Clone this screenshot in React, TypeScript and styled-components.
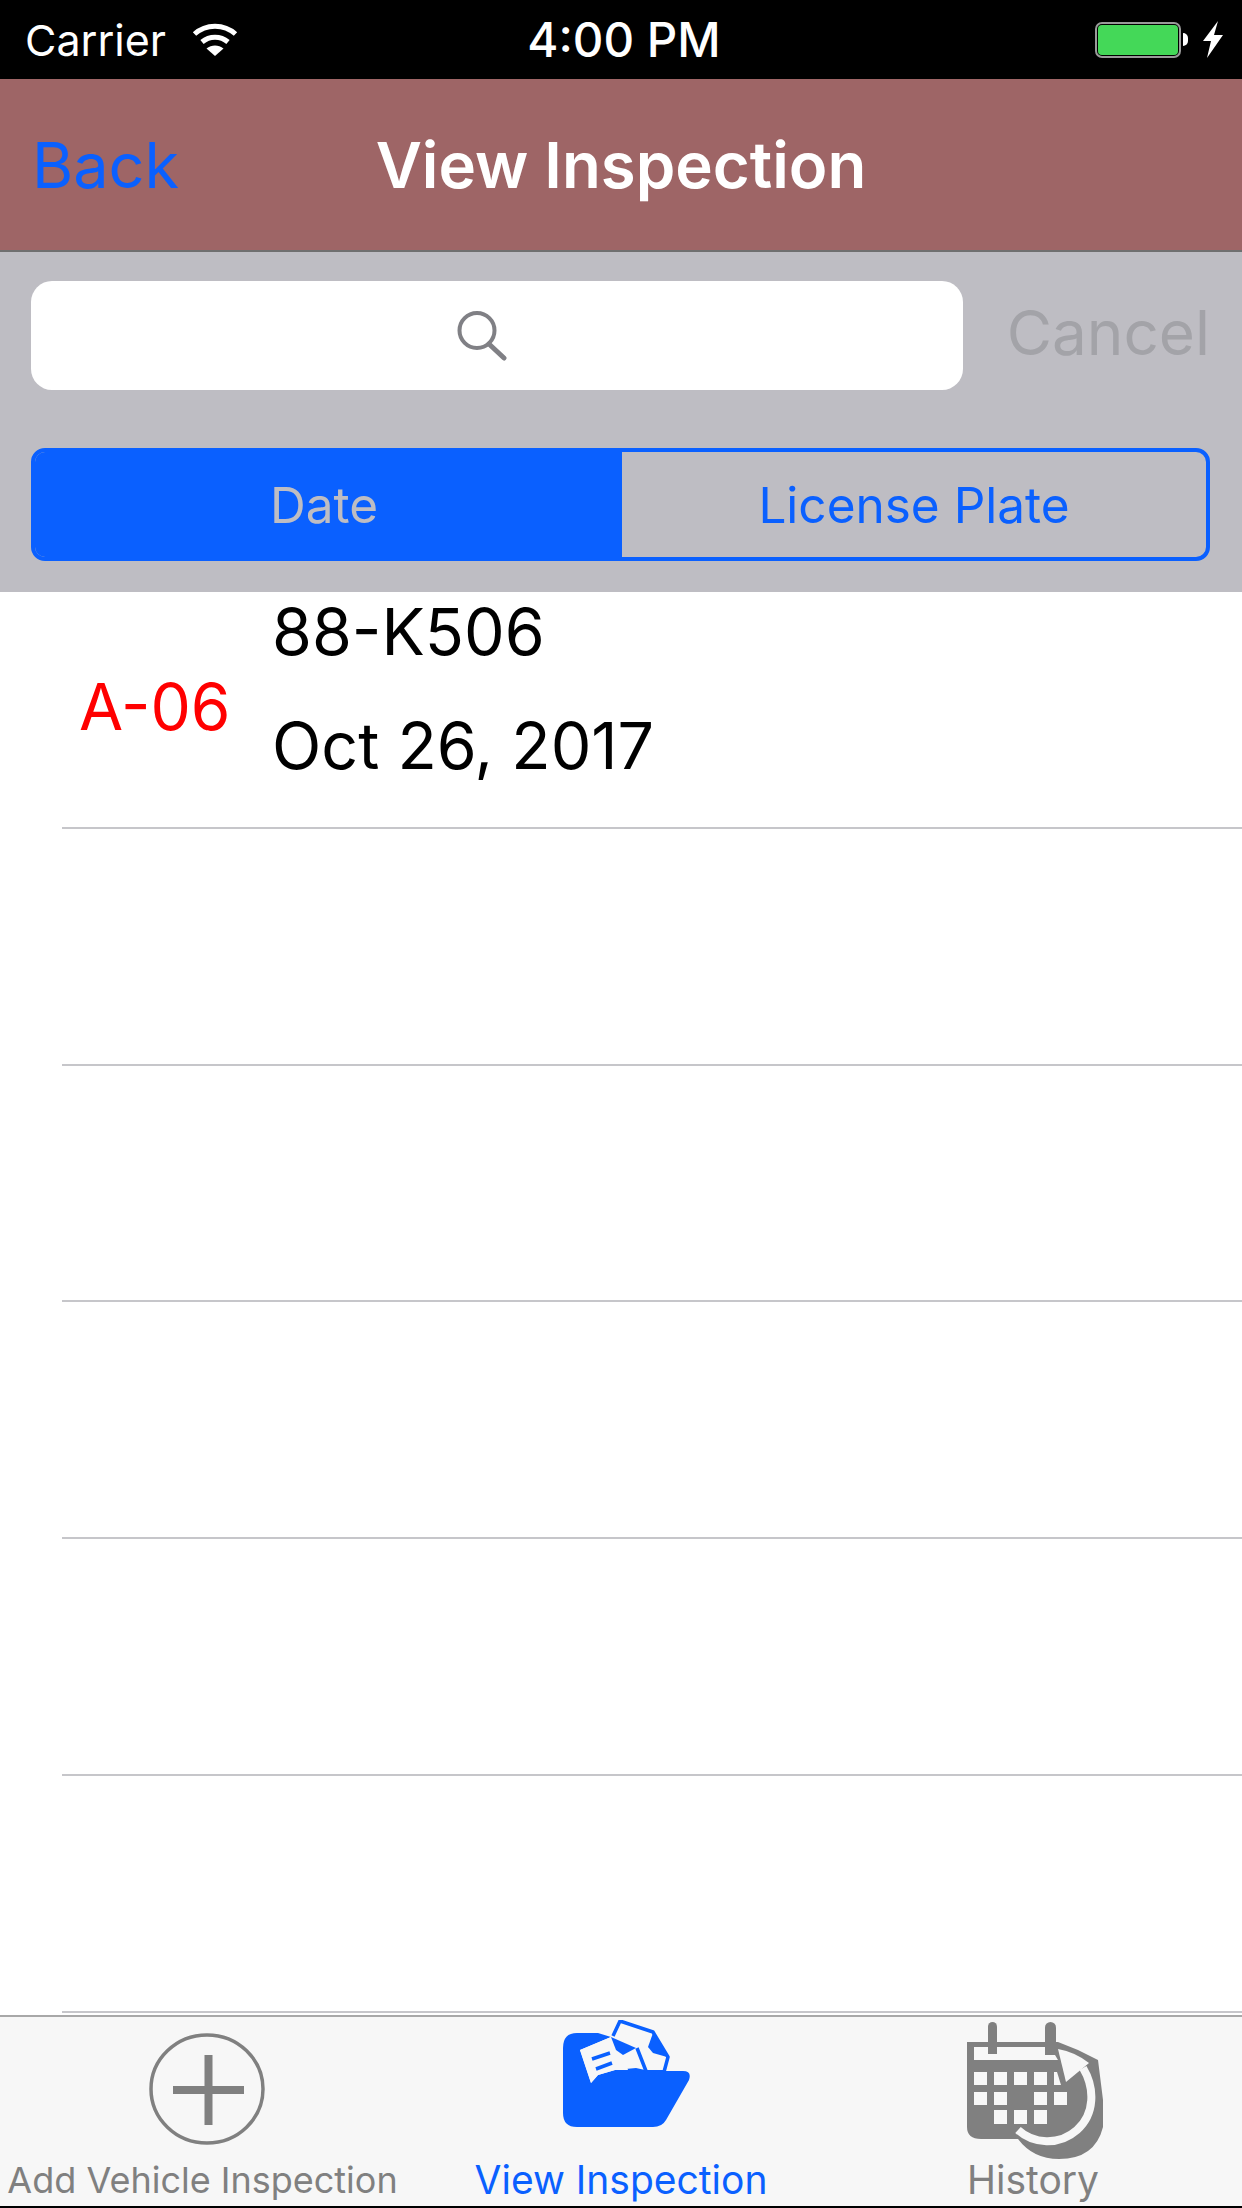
import { FC, ReactElement } from "react";
import styled, { createGlobalStyle } from "styled-components";

const GlobalStyle = createGlobalStyle`
  html, body {
    margin: 0;
    padding: 0;
    background: #fff;
  }
  * {
    box-sizing: border-box;
  }
`;

const rowCount = 6;

const WifiIcon: FC = () => (
  <svg width="46" height="34" viewBox="0 0 46 34" fill="none" stroke="#fff" strokeWidth="5">
    <path d="M2.5 11 C14 0.5 32 0.5 43.5 11" />
    <path d="M10 19 C17.5 12.5 28.5 12.5 36 19" />
    <path d="M23 33 L14.5 25.5 C19.5 21.5 26.5 21.5 31.5 25.5 Z" fill="#fff" stroke="none" />
  </svg>
);

const BoltIcon: FC = () => (
  <svg width="20" height="37" viewBox="0 0 20 37">
    <path d="M15 0 L0 20 H8 L4 37 L20 14 H11 Z" fill="#fff" />
  </svg>
);

const SearchIcon: FC = () => (
  <svg width="50" height="50" viewBox="0 0 50 50" fill="none" stroke="#808085">
    <circle cx="20" cy="19.5" r="17.5" strokeWidth="4" />
    <path d="M32 33 L47 47" strokeWidth="5" strokeLinecap="round" />
  </svg>
);

const AddIcon: FC = () => (
  <svg width="116" height="112" viewBox="0 0 116 112" fill="none" stroke="#808080">
    <ellipse cx="58" cy="56" rx="56" ry="54" strokeWidth="3.5" />
    <path d="M59.5 22 V92 M24 57 H95" strokeWidth="8" />
  </svg>
);

const FolderIcon: FC = () => (
  <svg width="127" height="107" viewBox="0 0 127 107">
    <path
      d="M0 28 Q0 13 14 13 H35 L48 17 L17 30 L28 63 L35 55 L52 50 L73 48 L82 50 H100 V51 H120 Q129 51 126 60 L103 100 Q99 107 90 107 H14 Q0 107 0 93 Z"
      fill="#0a60ff"
    />
    <path d="M17 30 L48 17 L54 31 L60 36 L65 50 L52 50 L35 55 L28 63 Z" fill="#f7f7f7" />
    <path d="M29 39 L47 33 M33 49 L49 43" stroke="#0a60ff" strokeWidth="3.5" fill="none" />
    <path d="M53 15 L58 3 L89 13 L103 38 L100 50 L84 50 L75 28 Z" fill="#f7f7f7" />
    <path
      d="M50 16 L57 1 L90 12 L105 37 L101 52 M74 28 L83 51"
      fill="none"
      stroke="#0a60ff"
      strokeWidth="3.5"
      strokeLinejoin="round"
    />
    <path d="M48 17 L73 28 L60 35 L53 30 Z" fill="#0a60ff" />
    <path d="M90 13 L104 37 L90 33 L85 27 Z" fill="#0a60ff" />
  </svg>
);

const calendarSquares = [
  { y: 50, h: 13, xs: [7, 27, 47, 67] },
  { y: 70, h: 13, xs: [7, 27, 67, 87] },
  { y: 88, h: 14, xs: [27, 47, 67] },
];

const HistoryIcon: FC = () => (
  <svg width="136" height="137" viewBox="0 0 136 137">
    <path
      d="M0 20 H91 L111 28 L131 38 L136 78 V105 Q128 137 92 137 Q66 137 51 117 H14 Q0 117 0 105 Z"
      fill="#808080"
    />
    <rect x="21" y="0" width="9" height="33" rx="4.5" fill="#808080" />
    <path d="M21 28 V6 Q25 -2 30 8 V28 Z" fill="#808080" />
    <rect x="78" y="0" width="11" height="33" rx="5.5" fill="#808080" />
    <path d="M7 25 H21 V32 H30 V25 H78 V33 H88 L91 38 H7 Z" fill="#f7f7f7" />
    {calendarSquares.map((row) =>
      row.xs.map((x) => (
        <rect key={`${row.y}-${x}`} x={x} y={row.y} width="13" height={row.h} fill="#f7f7f7" />
      ))
    )}
    <path d="M87 50 H90 L94 63 H87 Z" fill="#f7f7f7" />
    <path d="M91 27 L99 60 L122 41 Q108 30 91 27 Z" fill="#f7f7f7" />
    <path
      d="M116 46 C128 66 128 92 110 108 C92 124 66 122 51 108"
      fill="none"
      stroke="#f7f7f7"
      strokeWidth="8"
    />
  </svg>
);

const tabs: {
  label: string;
  active: boolean;
  icon: ReactElement;
  top: number;
  iconShift?: number;
  labelShift?: number;
  small?: boolean;
}[] = [
  { label: "Add Vehicle Inspection", active: false, icon: <AddIcon />, top: 16, labelShift: 9, small: true },
  { label: "View Inspection", active: true, icon: <FolderIcon />, top: 3, iconShift: 11 },
  { label: "History", active: false, icon: <HistoryIcon />, top: 5, labelShift: 4 },
];

export default function App() {
  return (
    <Screen>
      <GlobalStyle />
      <StatusBar>
        <StatusLeft>
          <span>Carrier</span>
          <WifiIcon />
        </StatusLeft>
        <StatusTime>4:00 PM</StatusTime>
        <StatusRight>
          <Battery>
            <BatteryFill />
          </Battery>
          <BatteryCap />
          <BoltIcon />
        </StatusRight>
      </StatusBar>
      <NavBar>
        <BackLink>Back</BackLink>
        <NavTitle>View Inspection</NavTitle>
      </NavBar>
      <SearchPanel>
        <SearchRow>
          <SearchField>
            <SearchIcon />
          </SearchField>
          <CancelLabel>Cancel</CancelLabel>
        </SearchRow>
        <Segments>
          <Segment $selected>Date</Segment>
          <Segment>License Plate</Segment>
        </Segments>
      </SearchPanel>
      <List>
        <Row>
          <Badge>A-06</Badge>
          <RowText>
            <RowLine>88-K506</RowLine>
            <RowLine>Oct 26, 2017</RowLine>
          </RowText>
        </Row>
        {Array.from({ length: rowCount - 1 }).map((_, i) => (
          <Row key={i} />
        ))}
      </List>
      <TabBar>
        {tabs.map((tab) => (
          <TabItem key={tab.label} $active={tab.active}>
            <TabIconSlot $top={tab.top} $shift={tab.iconShift ?? 0}>
              {tab.icon}
            </TabIconSlot>
            <TabLabel $small={tab.small} $shift={tab.labelShift ?? 0}>
              {tab.label}
            </TabLabel>
          </TabItem>
        ))}
      </TabBar>
      <HomeEdge />
    </Screen>
  );
}

const Screen = styled.div`
  width: 1242px;
  height: 2208px;
  display: flex;
  flex-direction: column;
  overflow: hidden;
  background: #fff;
  font-family: Inter, "Liberation Sans", sans-serif;
`;

const StatusBar = styled.div`
  height: 79px;
  flex: none;
  background: #000;
  color: #fff;
  display: grid;
  grid-template-columns: 1fr auto 1fr;
  align-items: center;
  padding: 0 19px 0 25px;
`;

const StatusLeft = styled.div`
  display: flex;
  align-items: center;
  gap: 26px;
  font-size: 43px;
`;

const StatusTime = styled.div`
  font-size: 47.5px;
  font-weight: 500;
`;

const StatusRight = styled.div`
  display: flex;
  align-items: center;
  justify-content: flex-end;
`;

const Battery = styled.div`
  width: 86px;
  height: 36px;
  border: 2px solid #9a9a9a;
  border-radius: 7px;
  padding: 1px;
`;

const BatteryFill = styled.div`
  height: 100%;
  background: #44d858;
  border-radius: 4px;
`;

const BatteryCap = styled.div`
  width: 5px;
  height: 13px;
  margin: 0 15px 0 2px;
  background: #fff;
  border-radius: 0 7px 7px 0;
`;

const NavBar = styled.div`
  height: 173px;
  flex: none;
  background: #9e6566;
  border-bottom: 2px solid #6f6f6f;
  display: grid;
  grid-template-columns: 1fr auto 1fr;
  align-items: center;
  padding-left: 32px;
  padding-right: 32px;
`;

const BackLink = styled.div`
  font-size: 63px;
  color: #0a60ff;
`;

const NavTitle = styled.div`
  font-size: 63.5px;
  font-weight: 600;
  color: #fff;
`;

const SearchPanel = styled.div`
  height: 340px;
  flex: none;
  background: #bebdc3;
  padding: 29px 32px 31px 31px;
  display: flex;
  flex-direction: column;
  justify-content: space-between;
`;

const SearchRow = styled.div`
  display: flex;
  align-items: center;
  justify-content: space-between;
`;

const SearchField = styled.div`
  width: 932px;
  height: 109px;
  background: #fff;
  border-radius: 21px;
  display: flex;
  align-items: center;
  justify-content: center;
  padding-right: 30px;
`;

const CancelLabel = styled.div`
  font-size: 62px;
  color: #a3a3a8;
  margin-bottom: 6px;
`;

const Segments = styled.div`
  height: 113px;
  display: grid;
  grid-template-columns: 587px 1fr;
  border: 4px solid #0a60ff;
  border-radius: 14px;
  overflow: hidden;
`;

const Segment = styled.div<{ $selected?: boolean }>`
  display: flex;
  align-items: center;
  justify-content: center;
  font-size: 49.5px;
  padding-right: ${(props) => (props.$selected ? 9 : 0)}px;
  background: ${(props) => (props.$selected ? "#0a60ff" : "transparent")};
  color: ${(props) => (props.$selected ? "#bebdc3" : "#0a60ff")};
`;

const List = styled.div`
  flex: 1;
  background: #fff;
`;

const Row = styled.div`
  height: 236.8px;
  display: flex;
  align-items: center;
  position: relative;
  &::after {
    content: "";
    position: absolute;
    left: 62px;
    right: 0;
    bottom: 0;
    height: 2px;
    background: #c6c6ca;
  }
`;

const Badge = styled.div`
  width: 272px;
  padding-left: 79px;
  font-size: 64px;
  color: #ff0000;
  margin-bottom: 8px;
`;

const RowText = styled.div`
  display: flex;
  flex-direction: column;
  gap: 34px;
  margin-bottom: 42px;
`;

const RowLine = styled.div`
  font-size: 64.5px;
  line-height: 80px;
  color: #000;
`;

const TabBar = styled.div`
  height: 191px;
  flex: none;
  background: #f7f7f7;
  border-top: 2px solid #a8a8a8;
  display: grid;
  grid-template-columns: repeat(3, 1fr);
`;

const TabItem = styled.div<{ $active: boolean }>`
  display: flex;
  flex-direction: column;
  align-items: center;
  color: ${(props) => (props.$active ? "#0a60ff" : "#808080")};
`;

const TabIconSlot = styled.div<{ $top: number; $shift: number }>`
  height: 140px;
  padding-top: ${(props) => props.$top}px;
  margin-left: ${(props) => props.$shift}px;
  display: flex;
  justify-content: center;
`;

const TabLabel = styled.div<{ $small?: boolean; $shift: number }>`
  font-size: ${(props) => (props.$small ? 36 : 39)}px;
  line-height: 46px;
  white-space: nowrap;
  margin-right: ${(props) => props.$shift}px;
`;

const HomeEdge = styled.div`
  height: 2px;
  flex: none;
  background: #000;
`;
